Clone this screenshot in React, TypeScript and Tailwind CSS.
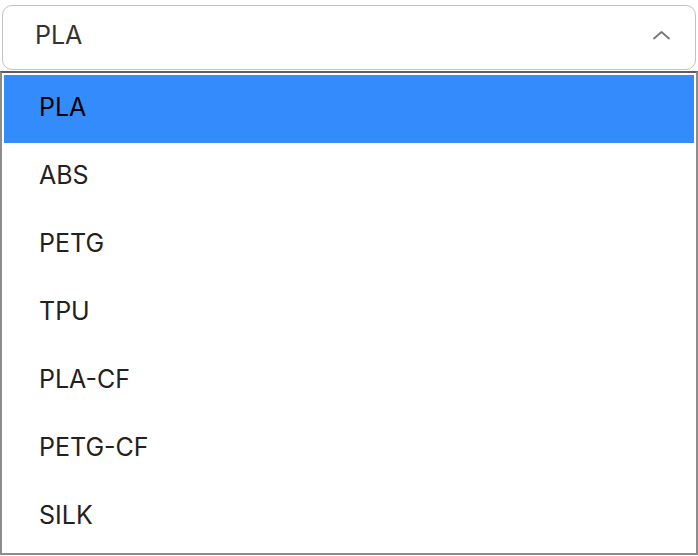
const options = ['PLA', 'ABS', 'PETG', 'TPU', 'PLA-CF', 'PETG-CF', 'SILK'];

function Chevron() {
  return (
    <svg width="19" height="10" viewBox="0 0 19 10" fill="none" className="mb-[2px] text-[#777]">
      <path d="M2 8.5 L9.5 2 L17 8.5" stroke="currentColor" strokeWidth="1.8" strokeLinecap="round" strokeLinejoin="round" />
    </svg>
  );
}

export default function App() {
  const selected = 'PLA';

  return (
    <div className="h-[556px] w-[698px] bg-white font-['Inter','Liberation_Sans',sans-serif]">
      <div className="px-[2px] pt-[5px]">
        <div className="flex h-[65px] items-center justify-between rounded-[10px] border-[1.5px] border-[#c2c2c2] bg-white pb-[3px] pl-[32px] pr-[24px]">
          <span className="text-[25px] text-[#333]">{selected}</span>
          <Chevron />
        </div>
      </div>
      <ul className="mt-px border-2 border-[#8d8d8d] border-t-[#5e5e5e] bg-white p-[2px]">
        {options.map((opt) => (
          <li
            key={opt}
            className={
              opt === selected
                ? 'flex h-[68px] items-center bg-[#348cfc] pb-[2px] pl-[35px] text-[25px] text-black'
                : 'flex h-[68px] items-center pb-[2px] pl-[35px] text-[25px] text-[#222]'
            }
          >
            {opt}
          </li>
        ))}
      </ul>
    </div>
  );
}
